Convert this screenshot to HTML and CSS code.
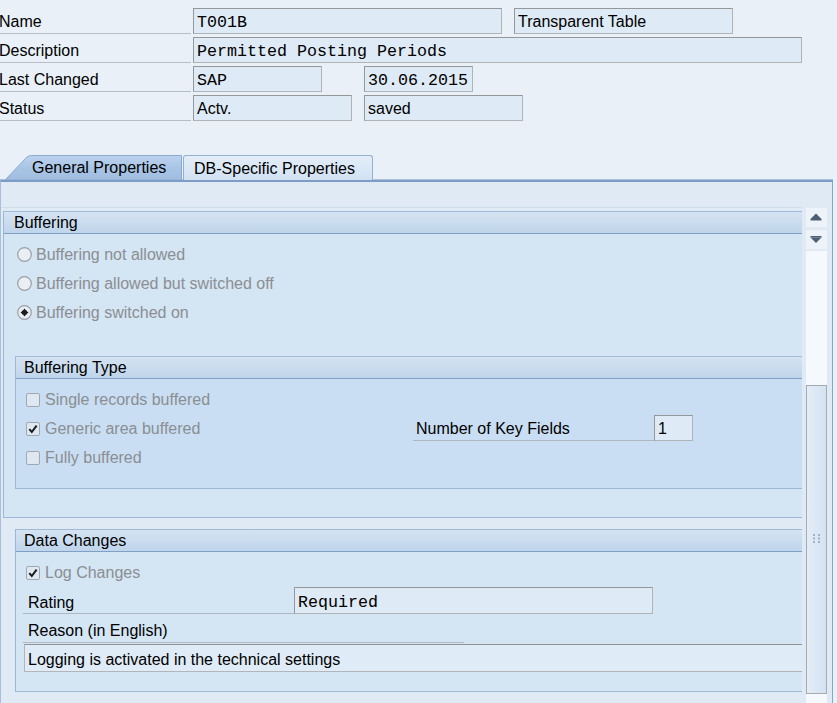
FILE: index.html
```html
<!DOCTYPE html>
<html>
<head>
<meta charset="utf-8">
<link rel="stylesheet" href="styles.css">
</head>
<body>
<div class="hdr">
  <div class="hrow">
    <span class="lbl">Name</span>
    <span class="fld mono w309">T001B</span>
    <span class="fld w219 ml12">Transparent Table</span>
  </div>
  <div class="hrow">
    <span class="lbl">Description</span>
    <span class="fld mono w609">Permitted Posting Periods</span>
  </div>
  <div class="hrow">
    <span class="lbl">Last Changed</span>
    <span class="fld mono w129">SAP</span>
    <span class="fld mono w109 ml42">30.06.2015</span>
  </div>
  <div class="hrow">
    <span class="lbl">Status</span>
    <span class="fld w159">Actv.</span>
    <span class="fld w159 ml12">saved</span>
  </div>
</div>

<div class="tabs">
  <div class="tab tab-active">
    <svg class="tabshape" width="182" height="25" viewBox="0 0 182 25">
      <defs>
        <linearGradient id="tg" x1="0" y1="0" x2="0" y2="1">
          <stop offset="0" stop-color="#bcd3ee"/>
          <stop offset="0.5" stop-color="#a9c5e6"/>
          <stop offset="1" stop-color="#a0bde1"/>
        </linearGradient>
      </defs>
      <path d="M5 25 L27 2 Q29 0.5 32 0.5 L181.5 0.5 L181.5 25 Z" fill="url(#tg)" stroke="#8aaad2" stroke-width="1"/>
    </svg>
    <span class="tab-text">General Properties</span>
  </div>
  <div class="tab tab-other">DB-Specific Properties</div>
</div>

<div class="panel">
  <div class="panel-top"></div>
  <div class="viewport">
    <div class="content">
      <div class="grp grp-buf">
        <div class="grp-h">Buffering</div>
        <div class="buf-body">
          <div class="opt">
            <svg class="ico rad" width="15" height="15" viewBox="0 0 15 15"><circle cx="7.5" cy="7.5" r="6.8" fill="#e9eff5" stroke="#9b9ea2" stroke-width="1.2"/></svg>
            <span>Buffering not allowed</span>
          </div>
          <div class="opt">
            <svg class="ico rad" width="15" height="15" viewBox="0 0 15 15"><circle cx="7.5" cy="7.5" r="6.8" fill="#e9eff5" stroke="#9b9ea2" stroke-width="1.2"/></svg>
            <span>Buffering allowed but switched off</span>
          </div>
          <div class="opt">
            <svg class="ico rad" width="15" height="15" viewBox="0 0 15 15"><circle cx="7.5" cy="7.5" r="6.8" fill="#e9eff5" stroke="#9b9ea2" stroke-width="1.2"/><circle cx="7.5" cy="7.5" r="2.7" fill="#1e1e1e"/><rect x="3.8" y="6.8" width="7.4" height="1.4" fill="#1e1e1e"/><rect x="6.8" y="3.8" width="1.4" height="7.4" fill="#1e1e1e"/></svg>
            <span>Buffering switched on</span>
          </div>

          <div class="sub">
            <div class="grp-h sub-h">Buffering Type</div>
            <div class="sub-body">
              <div class="opt">
                <svg class="ico" width="14" height="14" viewBox="0 0 14 14"><rect x="0.5" y="0.5" width="13" height="13" rx="1.5" fill="#dfe8f1" stroke="#a0a8b1"/></svg>
                <span>Single records buffered</span>
              </div>
              <div></div>
              <div class="opt">
                <svg class="ico" width="14" height="14" viewBox="0 0 14 14"><rect x="0.5" y="0.5" width="13" height="13" rx="1.5" fill="#dfe8f1" stroke="#a0a8b1"/><path d="M3.3 7.2 L5.8 10 L10.6 3.6" fill="none" stroke="#1a1a1a" stroke-width="2"/></svg>
                <span>Generic area buffered</span>
              </div>
              <div class="keyrow">
                <span class="keylbl">Number of Key Fields</span>
                <span class="fld keyfld">1</span>
              </div>
              <div class="opt">
                <svg class="ico" width="14" height="14" viewBox="0 0 14 14"><rect x="0.5" y="0.5" width="13" height="13" rx="1.5" fill="#dfe8f1" stroke="#a0a8b1"/></svg>
                <span>Fully buffered</span>
              </div>
              <div></div>
            </div>
          </div>
        </div>
      </div>

      <div class="grp grp-dc">
        <div class="grp-h sub-h">Data Changes</div>
        <div class="dc-body">
          <div class="opt logopt">
            <svg class="ico" width="14" height="14" viewBox="0 0 14 14"><rect x="0.5" y="0.5" width="13" height="13" rx="1.5" fill="#dfe8f1" stroke="#a0a8b1"/><path d="M3.3 7.2 L5.8 10 L10.6 3.6" fill="none" stroke="#1a1a1a" stroke-width="2"/></svg>
            <span>Log Changes</span>
          </div>
          <div class="raterow">
            <span class="ratelbl">Rating</span>
            <span class="fld mono ratefld">Required</span>
          </div>
          <div class="reasonlbl">Reason (in English)</div>
          <div class="fld reasonfld">Logging is activated in the technical settings</div>
        </div>
      </div>
    </div>

    <div class="scrollbar">
      <div class="sb-btn">
        <svg width="20" height="20" viewBox="0 0 20 20"><path d="M10 5.5 L15.5 11 L4.5 11 Z" fill="#4d5f74"/><rect x="4.5" y="11" width="11" height="1.5" fill="#4d5f74"/></svg>
      </div>
      <div class="sb-btn">
        <svg width="20" height="20" viewBox="0 0 20 20"><rect x="4.5" y="6" width="11" height="1.5" fill="#4d5f74"/><path d="M4.5 7.5 L15.5 7.5 L10 13 Z" fill="#4d5f74"/></svg>
      </div>
      <div class="sb-track">
        <div class="sb-gap"></div>
        <div class="sb-thumb">
          <svg width="8" height="9" viewBox="0 0 8 9"><g fill="#a7b0bb"><rect x="0" y="0" width="2" height="2"/><rect x="5" y="0" width="2" height="2"/><rect x="0" y="3.5" width="2" height="2"/><rect x="5" y="3.5" width="2" height="2"/><rect x="0" y="7" width="2" height="2"/><rect x="5" y="7" width="2" height="2"/></g></svg>
        </div>
      </div>
    </div>
  </div>
</div>
</body>
</html>
```

FILE: styles.css
```css
* { box-sizing: border-box; }
html, body { margin: 0; padding: 0; }
body {
  width: 837px;
  height: 703px;
  overflow: hidden;
  background: #e9f0f7;
  font-family: "Liberation Sans", Arial, sans-serif;
  font-size: 16px;
  color: #000;
}

/* header fields */
.hdr {
  padding-top: 8px;
  display: flex;
  flex-direction: column;
  gap: 3px;
}
.hrow { display: flex; height: 26px; }
.lbl {
  width: 192px;
  margin-right: 2px;
  border-bottom: 1px solid #b8bdc3;
  display: flex;
  align-items: center;
  margin-left: -1px;
  padding-top: 3px;
}
.fld {
  height: 26px;
  border: 1px solid;
  border-color: #959899 #b1b4b7 #b1b4b7 #959899;
  background: #deeaf5;
  display: flex;
  align-items: center;
  padding-left: 3px;
  padding-top: 2px;
  white-space: nowrap;
  overflow: hidden;
}
.mono { font-family: "Liberation Mono", monospace; font-size: 16.67px; }
.w309 { width: 309px; }
.w219 { width: 219px; }
.w609 { width: 609px; }
.w129 { width: 129px; }
.w109 { width: 109px; }
.w159 { width: 159px; }
.ml12 { margin-left: 12px; }
.ml42 { margin-left: 42px; }

/* tabs */
.tabs {
  margin-top: 34px;
  display: flex;
  height: 25px;
}
.tab { height: 25px; display: flex; align-items: center; padding-top: 1px; }
.tab-active {
  position: relative;
  width: 182px;
  padding-left: 32px;
}
.tabshape { position: absolute; left: 0; top: 0; }
.tab-text { position: relative; }
.tab-other {
  margin-left: 1px;
  width: 190px;
  padding-left: 10px;
  border: 1px solid #92b1d5;
  border-bottom: none;
  border-radius: 3px 3px 0 0;
  background: linear-gradient(#e3edf8, #d2e2f3);
}

/* panel */
.panel {
  width: 833px;
  height: 524px;
  border-top: 2px solid #7d9dc7;
  border-left: 1px solid #a9c0dc;
  border-right: 1px solid #86a6ce;
  background: #dfeaf5;
  box-shadow: 0 -1px 0 #a9c1de;
}
.panel-top { height: 25px; }
.viewport { display: flex; height: 497px; }
.content {
  width: 801px;
  overflow: hidden;
  padding-top: 4px;
  border-top: 1px solid #cfdded;
}

/* groups */
.grp {
  width: 860px;
  background: #d4e5f4;
  border-left: 1px solid #9db7d7;
  border-bottom: 1px solid #9db7d7;
}
.grp-buf { margin-left: 2px; margin-top: -1px; }
.grp-h {
  height: 23px;
  border-top: 1px solid #a1bad8;
  border-bottom: 1px solid #7f9fc4;
  background: linear-gradient(#d5e3f2, #bfd5eb);
  padding-left: 10px;
  padding-top: 1px;
  display: flex;
  align-items: center;
}
.sub-h { padding-left: 8px; }

.buf-body {
  padding: 6px 0 28px 13px;
}
.opt {
  height: 29px;
  display: flex;
  align-items: center;
  gap: 5px;
  color: #8b8e92;
  white-space: nowrap;
}
.opt span { padding-top: 1px; }
.ico { flex: none; }
.rad { margin-right: -1px; }
.buf-body > .opt:nth-child(3) { margin-bottom: 29px; }

.sub {
  margin-left: -2px;
  background: #c9def2;
  border-left: 1px solid #9db7d7;
  border-bottom: 1px solid #9db7d7;
}
.sub-body {
  padding: 6px 0 16px 10px;
  display: grid;
  grid-template-columns: 387px auto;
  grid-auto-rows: 29px;
}
.keyrow {
  display: flex;
  align-items: flex-start;
  padding-top: 1px;
}
.keylbl {
  width: 241px;
  height: 26px;
  border-bottom: 1px solid #b1b7be;
  padding-left: 3px;
  display: flex;
  align-items: center;
  padding-top: 2px;
}
.keyfld { width: 39px; }

/* data changes */
.grp-dc {
  margin-left: 14px;
  margin-top: 11px;
}
.dc-body {
  padding: 6px 0 19px 7px;
}
.logopt { margin-left: 3px; }
.raterow { display: flex; height: 27px; }
.ratelbl {
  width: 271px;
  height: 27px;
  border-bottom: 1px solid #b1b7be;
  padding-left: 5px;
  display: flex;
  align-items: center;
  padding-top: 5px;
}
.ratefld { width: 359px; height: 27px; padding-top: 3px; }
.reasonlbl {
  width: 441px;
  height: 29px;
  border-bottom: 1px solid #b1b7be;
  padding-left: 5px;
  display: flex;
  align-items: center;
  padding-top: 6px;
}
.reasonfld {
  margin-top: 1px;
  margin-left: 1px;
  width: 820px;
  height: 28px;
  padding-left: 3px;
  padding-top: 4px;
  border-color: #8f9294 #b3b6b9 #b3b6b9 #b3b6b9;
  background: #dfebf6;
}

/* scrollbar */
.scrollbar {
  width: 30px;
  padding-left: 4px;
  display: flex;
  flex-direction: column;
}
.sb-btn {
  width: 21px;
  height: 20px;
  background: #eef3f9;
  margin-top: 1px;
  margin-bottom: 1px;
  border-bottom: 1px solid #e3eaf2;
}
.sb-track {
  width: 21px;
  flex: 1;
  background: #f5f8fc;
  display: flex;
  flex-direction: column;
}
.sb-gap { height: 134px; }
.sb-thumb {
  width: 21px;
  height: 309px;
  border: 1px solid #a7aaae;
  background: linear-gradient(to right, #e4edf7, #d3e2f2);
  display: flex;
  align-items: center;
  justify-content: center;
  padding-bottom: 2px;
}
```
